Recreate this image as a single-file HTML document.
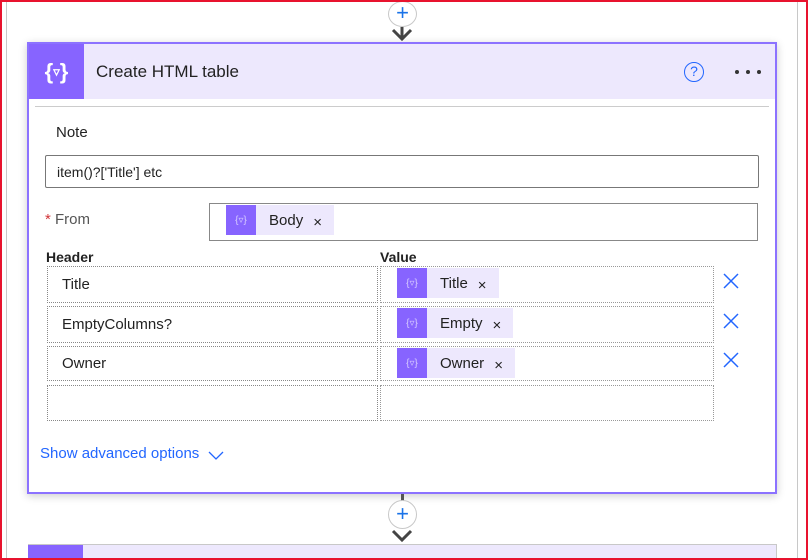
<!DOCTYPE html>
<html style="width:808px;height:560px;overflow:hidden"><head><meta charset="utf-8"><style>
*{box-sizing:border-box;margin:0;padding:0}
body{width:808px;height:560px;position:relative;overflow:hidden;background:#fff;font-family:"Segoe UI","Liberation Sans",sans-serif;color:#222}
.abs{position:absolute}
.red{border:2px solid #e8132e;position:absolute;left:0;top:0;width:808px;height:560px;z-index:10}
.tok{position:absolute;height:30px;background:#ede8fd;font-size:15px;display:flex;align-items:center}
.tok .ic{width:30px;height:30px;background:#8764ff;color:#d8cdff;font-size:10px;display:flex;align-items:center;justify-content:center;margin-right:13px}
.tok .x{font-size:15px;margin:0 12px 0 10px;position:relative;top:2px}
.cell{position:absolute;border:1px dotted #888;font-size:15px;padding-left:14px;display:flex;align-items:center}
.del{position:absolute;left:722px;width:18px;height:18px}
</style></head><body>
<div class="abs" style="left:6px;top:0;width:1px;height:560px;background:#c8c8c8"></div>
<div class="abs" style="left:797px;top:0;width:1px;height:560px;background:#c8c8c8"></div>
<div class="abs" style="left:388px;top:1px;width:29px;height:26px;border:1px solid #c8c8c8;border-radius:50%;background:#fff"></div>
<div class="abs" style="left:394px;top:0px;color:#1a73e8;font-size:22px;line-height:26px;width:17px;text-align:center">+</div>
<svg class="abs" style="left:391px;top:27px" width="22" height="16"><path d="M2 3 L11 12 L20 3 M11 0 V12" stroke="#444" stroke-width="3" fill="none"/></svg>
<div class="abs" style="left:27px;top:42px;width:750px;height:452px;border:2px solid #8c72ff;box-shadow:0 2px 8px rgba(0,0,0,.2);background:#fff"></div>
<div class="abs" style="left:29px;top:44px;width:746px;height:55px;background:#ede8fd"></div>
<div class="abs" style="left:29px;top:44px;width:55px;height:55px;background:#8764ff;color:#fff;font-size:22px;display:flex;align-items:center;justify-content:center;font-weight:bold">{<span style="font-size:13px">▿</span>}</div>
<div class="abs" style="left:96px;top:62px;font-size:17px;color:#222">Create HTML table</div>
<div class="abs" style="left:684px;top:62px;width:20px;height:20px;border:1.5px solid #2266ff;border-radius:50%;color:#2266ff;font-size:14px;text-align:center;line-height:17px">?</div>
<div class="abs" style="left:735px;top:70px;width:4px;height:4px;background:#333;border-radius:50%"></div>
<div class="abs" style="left:746px;top:70px;width:4px;height:4px;background:#333;border-radius:50%"></div>
<div class="abs" style="left:757px;top:70px;width:4px;height:4px;background:#333;border-radius:50%"></div>
<div class="abs" style="left:35px;top:106px;width:734px;height:1px;background:#ccc"></div>
<div class="abs" style="left:56px;top:124px;font-size:15px">Note</div>
<div class="abs" style="left:45px;top:155px;width:714px;height:33px;border:1px solid #777;border-radius:2px;font-size:14px;padding-left:11px;line-height:33px">item()?['Title'] etc</div>
<div class="abs" style="left:45px;top:211px;font-size:15px;color:#555"><span style="color:#d13438">*</span> From</div>
<div class="abs" style="left:209px;top:203px;width:549px;height:38px;border:1px solid #888"></div>
<div class="tok" style="left:226px;top:205px"><div class="ic">{▿}</div>Body<span class="x">×</span></div>
<div class="abs" style="left:46px;top:249px;font-size:14px;font-weight:bold">Header</div>
<div class="abs" style="left:380px;top:249px;font-size:14px;font-weight:bold">Value</div>
<div class="cell" style="left:47px;top:266px;width:331px;height:37px">Title</div>
<div class="cell" style="left:380px;top:266px;width:334px;height:37px;border-color:#999"></div>
<div class="cell" style="left:47px;top:306px;width:331px;height:37px">EmptyColumns?</div>
<div class="cell" style="left:380px;top:306px;width:334px;height:37px;border-color:#999"></div>
<div class="cell" style="left:47px;top:346px;width:331px;height:35px">Owner</div>
<div class="cell" style="left:380px;top:346px;width:334px;height:35px;border-color:#999"></div>
<div class="cell" style="left:47px;top:385px;width:331px;height:36px"></div>
<div class="cell" style="left:380px;top:385px;width:334px;height:36px;border-color:#999"></div>
<div class="tok" style="left:397px;top:268px"><div class="ic">{▿}</div>Title<span class="x">×</span></div>
<div class="tok" style="left:397px;top:308px"><div class="ic">{▿}</div>Empty<span class="x">×</span></div>
<div class="tok" style="left:397px;top:348px"><div class="ic">{▿}</div>Owner<span class="x">×</span></div>
<svg class="del" style="top:272px" viewBox="0 0 18 18"><path d="M2 2L16 16M16 2L2 16" stroke="#2266ff" stroke-width="1.5"/></svg>
<svg class="del" style="top:312px" viewBox="0 0 18 18"><path d="M2 2L16 16M16 2L2 16" stroke="#2266ff" stroke-width="1.5"/></svg>
<svg class="del" style="top:351px" viewBox="0 0 18 18"><path d="M2 2L16 16M16 2L2 16" stroke="#2266ff" stroke-width="1.5"/></svg>
<div class="abs" style="left:40px;top:445px;font-size:15px;color:#2266ff">Show advanced options</div>
<svg class="abs" style="left:207px;top:449px" width="18" height="12"><path d="M2 3L9 10L16 3" stroke="#2266ff" stroke-width="1.3" fill="none"/></svg>
<div class="abs" style="left:401px;top:494px;width:3px;height:8px;background:#555"></div>
<div class="abs" style="left:388px;top:500px;width:29px;height:29px;border:1px solid #c8c8c8;border-radius:50%;background:#fff;color:#1a73e8;font-size:22px;line-height:26px;text-align:center">+</div>
<svg class="abs" style="left:391px;top:528px" width="22" height="16"><path d="M2 3L11 12L20 3" stroke="#444" stroke-width="3" fill="none"/></svg>
<div class="abs" style="left:28px;top:544px;width:749px;height:16px;background:#ede8fd;border:1px solid #c8c8c8;border-bottom:none"></div>
<div class="abs" style="left:28px;top:545px;width:55px;height:15px;background:#8764ff"></div>
<div class="red"></div>
</body></html>
